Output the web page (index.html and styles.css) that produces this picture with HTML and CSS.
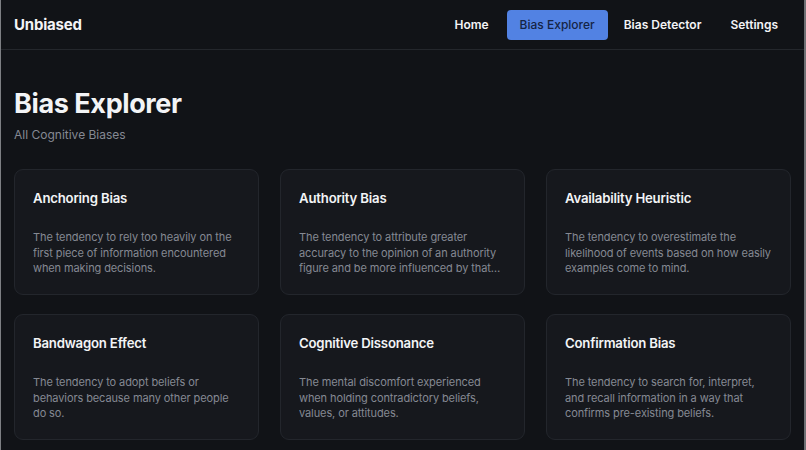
FILE: index.html
```html
<!DOCTYPE html>
<html lang="en">

<head>
    <meta charset="UTF-8" />
    <meta name="viewport" content="width=device-width, initial-scale=1.0" />
    <title>Unbiased - Bias Explorer</title>
    <link rel="stylesheet" href="styles.css">
</head>

<body>
    <header class="topbar">
        <div class="brand">Unbiased</div>
        <nav class="nav">
            <a class="nav-link" href="#">Home</a>
            <a class="nav-link active" href="#">Bias Explorer</a>
            <a class="nav-link" href="#">Bias Detector</a>
            <a class="nav-link" href="#">Settings</a>
        </nav>
    </header>

    <main class="page">
        <h1 class="page-title">Bias Explorer</h1>
        <p class="page-subtitle">All Cognitive Biases</p>

        <section class="bias-grid">
            <article class="bias-card">
                <h2>Anchoring Bias</h2>
                <p>The tendency to rely too heavily on the first piece of information encountered when making decisions.</p>
            </article>
            <article class="bias-card">
                <h2>Authority Bias</h2>
                <p>The tendency to attribute greater accuracy to the opinion of an authority figure and be more influenced by that opinion.</p>
            </article>
            <article class="bias-card">
                <h2>Availability Heuristic</h2>
                <p>The tendency to overestimate the likelihood of events based on how easily examples come to mind.</p>
            </article>
            <article class="bias-card">
                <h2>Bandwagon Effect</h2>
                <p>The tendency to adopt beliefs or behaviors because many other people do so.</p>
            </article>
            <article class="bias-card">
                <h2>Cognitive Dissonance</h2>
                <p>The mental discomfort experienced when holding contradictory beliefs, values, or attitudes.</p>
            </article>
            <article class="bias-card">
                <h2>Confirmation Bias</h2>
                <p>The tendency to search for, interpret, and recall information in a way that confirms pre-existing beliefs.</p>
            </article>
        </section>
    </main>
</body>

</html>
```

FILE: styles.css
```css
* {
    margin: 0;
    padding: 0;
    box-sizing: border-box;
    font-family: Inter, "Noto Sans", sans-serif;
}

:root {
    --bg: #111317;
    --card-bg: #16181d;
    --card-border: #23262c;
    --line: #24272c;
    --text: #f3f4f6;
    --muted: #858993;
    --accent: #5282e3;
}

html,
body {
    height: 100%;
}

body {
    background-color: var(--bg);
    color: var(--text);
    border-left: 1px solid #7d7f83;
    border-right: 2px solid #6f7175;
    overflow: hidden;
}

.topbar {
    height: 50px;
    display: flex;
    align-items: center;
    justify-content: space-between;
    padding: 0 13px;
    border-bottom: 1px solid var(--line);
}

.brand {
    font-size: 15px;
    font-weight: 700;
    letter-spacing: -0.2px;
}

.nav {
    display: flex;
    align-items: center;
    gap: 3px;
}

.nav-link {
    color: var(--text);
    text-decoration: none;
    font-size: 12px;
    font-weight: 600;
    line-height: 14px;
    padding: 8px 13px;
    border-radius: 4px;
}

.nav-link:first-child {
    margin-right: 2px;
}

.nav-link.active {
    background-color: var(--accent);
    color: #152445;
    font-weight: 500;
}

.page {
    padding: 38px 13px 0;
}

.page-title {
    font-size: 27px;
    font-weight: 700;
    letter-spacing: -0.4px;
    line-height: 32px;
}

.page-subtitle {
    margin-top: 7px;
    font-size: 12px;
    line-height: 16px;
    color: var(--muted);
}

.bias-grid {
    margin-top: 26px;
    display: grid;
    grid-template-columns: repeat(3, 1fr);
    gap: 19px 21px;
}

.bias-card {
    height: 126px;
    background-color: var(--card-bg);
    border: 1px solid var(--card-border);
    border-radius: 9px;
    padding: 19px 18px;
}

.bias-card h2 {
    font-size: 13.2px;
    font-weight: 600;
    letter-spacing: -0.2px;
    line-height: 18px;
}

.bias-card p {
    margin-top: 23px;
    font-size: 11px;
    line-height: 15.5px;
    letter-spacing: -0.1px;
    color: var(--muted);
    display: -webkit-box;
    -webkit-line-clamp: 3;
    -webkit-box-orient: vertical;
    overflow: hidden;
}
```
